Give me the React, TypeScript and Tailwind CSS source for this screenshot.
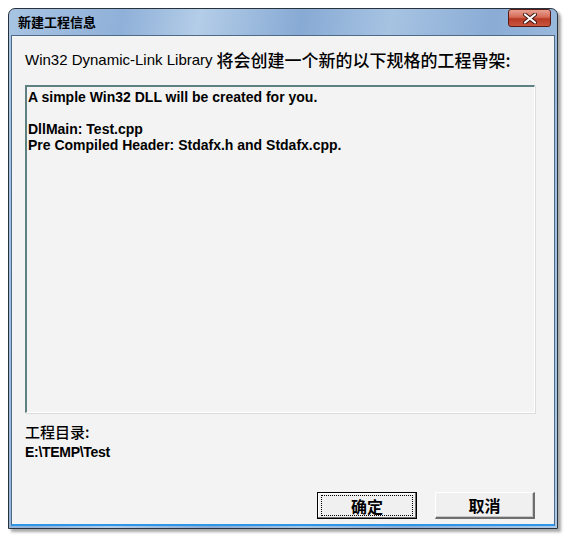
import React from "react";

const ui = { fontFamily: '"Liberation Sans", "Noto Sans CJK SC", sans-serif' };
const cjk = { fontFamily: '"Noto Sans CJK SC", "Liberation Sans", sans-serif' };

function CloseButton() {
  return (
    <div className="w-[43px] h-[18px] rounded-[3px] border border-[#5a1a14] bg-[linear-gradient(180deg,#e8a092_0%,#d66a56_45%,#b83a26_55%,#c9563e_100%)] flex items-center justify-center">
      <svg width="14" height="11" viewBox="0 0 14 11">
        <path d="M2 1.5 L12 9.5 M12 1.5 L2 9.5" stroke="#3b1510" strokeWidth="4" strokeLinecap="round" />
        <path d="M2 1.5 L12 9.5 M12 1.5 L2 9.5" stroke="#ffffff" strokeWidth="2.2" strokeLinecap="round" />
      </svg>
    </div>
  );
}

function WinButton({ label, focused }: { label: string; focused?: boolean }) {
  return (
    <div
      className={
        "w-[100px] h-[27px] bg-[#f0f0f0] flex items-center justify-center " +
        (focused
          ? "border border-black shadow-[inset_-1px_-1px_0_#6e6e6e,inset_1px_1px_0_#ffffff]"
          : "border-t border-l border-white border-b-2 border-r-2 border-b-[#6e6e6e] border-r-[#6e6e6e] shadow-[inset_-1px_-1px_0_#c8c8c8]")
      }
    >
      <div
        className={
          "w-[92px] h-[21px] flex items-center justify-center text-[16px] font-bold text-black " +
          (focused ? "border border-dotted border-black" : "")
        }
        style={cjk}
      >
        {label}
      </div>
    </div>
  );
}

export default function App() {
  return (
    <div className="w-[570px] h-[541px] bg-white pt-[8px] pl-[8px]">
      <div className="w-[550px] h-[521px] flex flex-col rounded-t-[7px] border border-[#27323d] bg-[linear-gradient(100deg,#a8c4e3_0%,#8fb0d8_18%,#b4cde8_30%,#87aad4_46%,#a7c3e2_60%,#8aacd5_76%,#adc8e6_100%)] shadow-[3px_3px_3px_rgba(0,0,0,0.35)] px-[2px] pb-[2px]">
        {/* Title bar */}
        <div className="h-[26px] flex items-start justify-between pl-[7px] pr-[4px]">
          <span className="mt-[5px] text-[13px] font-bold text-black leading-[16px]" style={cjk}>
            新建工程信息
          </span>
          <CloseButton />
        </div>

        {/* Client area */}
        <div className="flex-1 flex flex-col bg-[#f3f3f3] border border-[#4d6a86] border-b-2 border-b-[#2f95e6] pl-[13px] pr-[19px]">
          <div className="mt-[14px] h-[20px] flex items-center text-[15px] leading-[20px] text-black whitespace-nowrap" style={ui}>
            <span>Win32 Dynamic-Link Library</span>
            <span className="ml-[4px] text-[17px] font-medium" style={cjk}>
              将会创建一个新的以下规格的工程骨架:
            </span>
          </div>

          <div
            className="mt-[15px] h-[328px] border-t-2 border-l-2 border-t-[#5f8080] border-l-[#5f8080] border-b border-r border-b-white border-r-white shadow-[1px_1px_0_#dcdcdc] pl-[1px] pt-[2px] text-[14px] font-bold leading-[16px] text-black"
            style={ui}
          >
            <div>A simple Win32 DLL will be created for you.</div>
            <div className="h-[16px]" />
            <div>DllMain: Test.cpp</div>
            <div>Pre Compiled Header: Stdafx.h and Stdafx.cpp.</div>
          </div>

          <div className="mt-[9px] h-[20px] text-[15px] leading-[20px] text-black font-medium" style={cjk}>
            工程目录:
          </div>
          <div className="mt-[2px] h-[16px] text-[14px] leading-[16px] font-bold text-black tracking-[-0.3px]" style={ui}>
            E:\TEMP\Test
          </div>

          <div className="mt-auto mb-[5px] flex justify-end gap-[18px]">
            <WinButton label="确定" focused />
            <WinButton label="取消" />
          </div>
        </div>
      </div>
    </div>
  );
}
